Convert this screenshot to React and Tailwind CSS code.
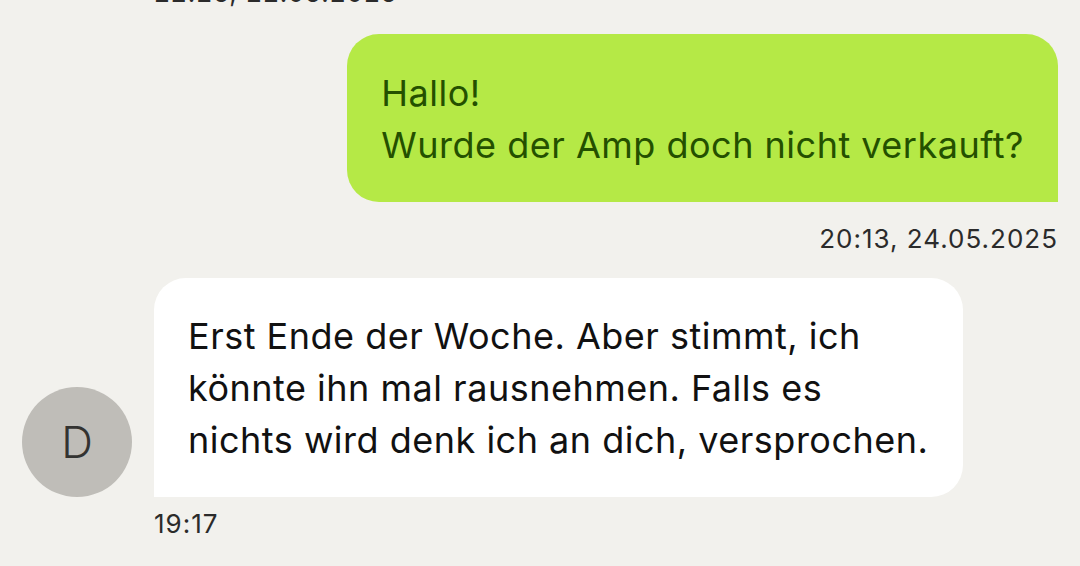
import React from 'react';

const font = { fontFamily: 'Inter, "Noto Sans", sans-serif' };

const messages = [
    { id: 1, mine: true, text: ['Hallo!', 'Wurde der Amp doch nicht verkauft?'], time: '20:13, 24.05.2025' },
    {
        id: 2,
        mine: false,
        text: ['Erst Ende der Woche. Aber stimmt, ich', 'könnte ihn mal rausnehmen. Falls es', 'nichts wird denk ich an dich, versprochen.'],
        time: '19:17',
    },
];

const App = () => {
    return (
        <div className="min-h-screen w-full overflow-hidden bg-[#f2f1ed] px-[22px]" style={font}>
            {/* previous message timestamp, scrolled off the top */}
            <div className="-mt-[23px] pl-[132px] text-[26px] leading-[32px] tracking-[1px] text-[#2b2b2b]">22:26, 22.05.2025</div>

            {messages.map((msg) =>
                msg.mine ? (
                    <div key={msg.id} className="mt-[25px] flex flex-col items-end">
                        <div className="w-fit rounded-[32px] rounded-br-none bg-[#b5e946] px-[34px] pt-[33px] pb-[31px] text-[36px] leading-[52px] tracking-[0.5px] text-[#245000]">
                            {msg.text.map((line, i) => (
                                <div key={i}>{line}</div>
                            ))}
                        </div>
                        <div className="mt-[21px] text-[26px] leading-[32px] tracking-[1px] text-[#2b2b2b]">{msg.time}</div>
                    </div>
                ) : (
                    <div key={msg.id} className="mt-[23px]">
                        <div className="flex items-end gap-[22px]">
                            <div className="flex h-[110px] w-[110px] shrink-0 items-center justify-center rounded-full bg-[#bfbdb8] text-[44px] font-light text-[#333331]">
                                D
                            </div>
                            <div className="w-[809px] rounded-[32px] rounded-bl-none bg-white px-[34px] pt-[32px] pb-[31px] text-[36px] leading-[52px] tracking-[0.5px] text-[#111111]">
                                {msg.text.map((line, i) => (
                                    <div key={i}>{line}</div>
                                ))}
                            </div>
                        </div>
                        <div className="mt-[11px] pl-[132px] text-[26px] leading-[32px] tracking-[1px] text-[#2b2b2b]">{msg.time}</div>
                    </div>
                )
            )}
        </div>
    );
};

export default App;
